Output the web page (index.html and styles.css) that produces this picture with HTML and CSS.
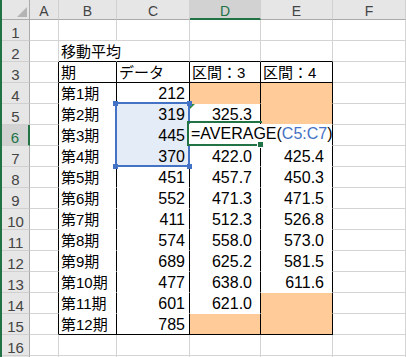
FILE: index.html
```html
<!DOCTYPE html>
<html lang="ja">
<head>
    <meta charset="UTF-8">
    <meta name="viewport" content="width=device-width, initial-scale=1.0">
    <title>移動平均</title>
    <link rel="stylesheet" href="styles.css">
</head>
<body>
    <div class="sheet">
        <!-- 列見出し -->
        <div class="corner"><svg width="10" height="10" viewBox="0 0 10 10"><polygon points="10,0 10,10 0,10" fill="#b4b4b4"/></svg></div>
        <div class="ch">A</div>
        <div class="ch">B</div>
        <div class="ch">C</div>
        <div class="ch sel">D</div>
        <div class="ch">E</div>
        <div class="ch">F</div>

        <!-- 1 -->
        <div class="rh">1</div>
        <div class="c"></div>
        <div class="c"></div>
        <div class="c"></div>
        <div class="c"></div>
        <div class="c"></div>
        <div class="c"></div>

        <!-- 2 -->
        <div class="rh">2</div>
        <div class="c"></div>
        <div class="c jp bb title">移動平均</div>
        <div class="c bb"></div>
        <div class="c bb"></div>
        <div class="c bb"></div>
        <div class="c"></div>

        <!-- 3: 表の見出し -->
        <div class="rh">3</div>
        <div class="c rb"></div>
        <div class="t jp bb">期</div>
        <div class="t jp bb">データ</div>
        <div class="t jp bb">区間：3</div>
        <div class="t jp bb">区間：4</div>
        <div class="c"></div>

        <!-- 4 -->
        <div class="rh">4</div>
        <div class="c rb"></div>
        <div class="t jp">第1期</div>
        <div class="t num">212</div>
        <div class="t or"></div>
        <div class="t or"></div>
        <div class="c"></div>

        <!-- 5 -->
        <div class="rh">5</div>
        <div class="c rb"></div>
        <div class="t jp">第2期</div>
        <div class="t num hl">319</div>
        <div class="t avg err">325.3</div>
        <div class="t or"></div>
        <div class="c"></div>

        <!-- 6 -->
        <div class="rh sel">6</div>
        <div class="c rb"></div>
        <div class="t jp">第3期</div>
        <div class="t num hl">445</div>
        <div class="t avg"></div>
        <div class="t avg"></div>
        <div class="c"></div>

        <!-- 7 -->
        <div class="rh">7</div>
        <div class="c rb"></div>
        <div class="t jp">第4期</div>
        <div class="t num hl">370</div>
        <div class="t avg">422.0</div>
        <div class="t avg">425.4</div>
        <div class="c"></div>

        <!-- 8 -->
        <div class="rh">8</div>
        <div class="c rb"></div>
        <div class="t jp">第5期</div>
        <div class="t num">451</div>
        <div class="t avg">457.7</div>
        <div class="t avg">450.3</div>
        <div class="c"></div>

        <!-- 9 -->
        <div class="rh">9</div>
        <div class="c rb"></div>
        <div class="t jp">第6期</div>
        <div class="t num">552</div>
        <div class="t avg">471.3</div>
        <div class="t avg">471.5</div>
        <div class="c"></div>

        <!-- 10 -->
        <div class="rh">10</div>
        <div class="c rb"></div>
        <div class="t jp">第7期</div>
        <div class="t num">411</div>
        <div class="t avg">512.3</div>
        <div class="t avg">526.8</div>
        <div class="c"></div>

        <!-- 11 -->
        <div class="rh">11</div>
        <div class="c rb"></div>
        <div class="t jp">第8期</div>
        <div class="t num">574</div>
        <div class="t avg">558.0</div>
        <div class="t avg">573.0</div>
        <div class="c"></div>

        <!-- 12 -->
        <div class="rh">12</div>
        <div class="c rb"></div>
        <div class="t jp">第9期</div>
        <div class="t num">689</div>
        <div class="t avg">625.2</div>
        <div class="t avg">581.5</div>
        <div class="c"></div>

        <!-- 13 -->
        <div class="rh">13</div>
        <div class="c rb"></div>
        <div class="t jp">第10期</div>
        <div class="t num">477</div>
        <div class="t avg">638.0</div>
        <div class="t avg">611.6</div>
        <div class="c"></div>

        <!-- 14 -->
        <div class="rh">14</div>
        <div class="c rb"></div>
        <div class="t jp">第11期</div>
        <div class="t num">601</div>
        <div class="t avg">621.0</div>
        <div class="t or"></div>
        <div class="c"></div>

        <!-- 15 -->
        <div class="rh">15</div>
        <div class="c rb"></div>
        <div class="t jp bb">第12期</div>
        <div class="t num bb">785</div>
        <div class="t or bb"></div>
        <div class="t or bb"></div>
        <div class="c"></div>

        <!-- 16 -->
        <div class="rh">16</div>
        <div class="c"></div>
        <div class="c"></div>
        <div class="c"></div>
        <div class="c"></div>
        <div class="c"></div>
        <div class="c"></div>

        <!-- 17 (下端で見切れる行) -->
        <div class="rh"></div>
        <div class="c"></div>
        <div class="c"></div>
        <div class="c"></div>
        <div class="c"></div>
        <div class="c"></div>
        <div class="c"></div>

        <!-- 参照範囲 C5:C7 -->
        <div class="range">
            <i class="knob tl"></i><i class="knob tr"></i>
            <i class="knob bl"></i><i class="knob br"></i>
        </div>

        <!-- D6 の編集中の数式 -->
        <div class="editor">=AVERAGE(<span class="ref">C5:C7</span>)</div>
        <div class="active"><i class="fill"></i></div>
    </div>
</body>
</html>
```

FILE: styles.css
```css
* {
    margin: 0;
    padding: 0;
    box-sizing: border-box;
}

html, body {
    height: 100%;
    overflow: hidden;
    background: #fff;
}

body {
    font-family: "Liberation Sans", "Noto Sans CJK JP", sans-serif;
    font-size: 16px;
    color: #000;
}

.sheet {
    position: relative;
    display: grid;
    grid-template-columns: 28px 29px 58px 73px 71px 72px 1fr;
    grid-template-rows: 20px repeat(17, 21px);
    border-left: 2px solid #217346;
}

/* 見出し */
.corner {
    display: flex;
    align-items: flex-end;
    justify-content: flex-end;
    padding: 0 2px 2px 0;
    background: #e6e6e6;
    border-right: 1px solid #ababab;
    border-bottom: 1px solid #ababab;
}

.ch {
    background: #e6e6e6;
    border-right: 1px solid #d0d0d0;
    border-bottom: 1px solid #ababab;
    color: #444;
    font-size: 14px;
    line-height: 18px;
    padding-top: 2px;
    text-align: center;
}

.ch.sel {
    background: #d2d2d2;
    color: #217346;
    border-bottom: 2px solid #217346;
}

.rh {
    background: #e6e6e6;
    border-right: 1px solid #ababab;
    border-bottom: 1px solid #d0d0d0;
    color: #444;
    font-size: 15px;
    line-height: 20px;
    padding-top: 3px;
    text-align: center;
}

.rh.sel {
    background: #d2d2d2;
    color: #217346;
    border-right: 2px solid #217346;
}

/* セル */
.c, .t {
    border-right: 1px solid #d4d4d4;
    border-bottom: 1px solid #d4d4d4;
    line-height: 20px;
    padding: 1px 2px 0 2px;
    white-space: nowrap;
}

.t {
    background: #fff;
    border-right-color: #000;
    border-bottom-color: transparent;
}

.rb {
    border-right-color: #000;
}

.bb {
    border-bottom-color: #000;
}

.jp {
    font-size: 15px;
}

.title {
    position: relative;
    z-index: 1;
    border-right-color: #fff;
}

.num {
    text-align: right;
    padding-right: 4px;
}

.avg {
    text-align: right;
    padding-right: 8px;
}

.or {
    background: #ffcc99;
}

.hl {
    background: #e4ecf7;
}

.err {
    position: relative;
}

.err::before {
    content: "";
    position: absolute;
    left: 0;
    top: 0;
    border-top: 5px solid #2e8b3e;
    border-right: 5px solid transparent;
}

/* 参照範囲の枠 */
.range {
    position: absolute;
    left: 113px;
    top: 102px;
    width: 75px;
    height: 65px;
    border: 2px solid #4472c4;
}

.knob {
    position: absolute;
    width: 5px;
    height: 5px;
    background: #4472c4;
}

.knob.tl { left: -4px; top: -3px; }
.knob.tr { right: -4px; top: -3px; }
.knob.bl { left: -4px; bottom: -4px; }
.knob.br { right: -4px; bottom: -4px; }

/* 数式の入力 */
.editor {
    position: absolute;
    left: 187px;
    top: 124px;
    width: 143px;
    height: 21px;
    background: #fff;
    line-height: 20px;
    padding-left: 2px;
    white-space: nowrap;
}

.ref {
    color: #4472c4;
}

.active {
    position: absolute;
    left: 185px;
    top: 121px;
    width: 75px;
    height: 25px;
    border: 2px solid #217346;
    border-right: 0;
}

.fill {
    position: absolute;
    right: -2px;
    bottom: -4px;
    width: 7px;
    height: 7px;
    background: #217346;
    border: 1px solid #fff;
}
```
